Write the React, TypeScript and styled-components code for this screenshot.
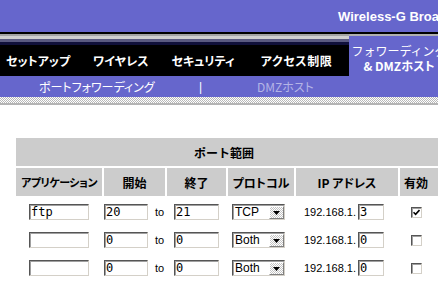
import React from 'react';
import styled, { createGlobalStyle } from 'styled-components';

const PURPLE = '#6666cc';
const JP = `"Noto Sans CJK JP", "Noto Sans", sans-serif`;
const LATIN = `"Liberation Sans", Arial, sans-serif`;
const MONO = `"DejaVu Sans Mono", "Liberation Mono", monospace`;
const COLS = '86px 61px 59px 66px 102px 40px';

const GlobalStyle = createGlobalStyle`
  html, body { margin: 0; padding: 0; background: #fff; }
  body { font-family: ${JP}; overflow: hidden; width: 438px; height: 288px; }
`;

const Page = styled.div`
  width: 438px;
  overflow: hidden;
`;

const TopBar = styled.header`
  height: 32px;
  background: ${PURPLE};
  display: flex;
  align-items: center;
  padding-left: 338px;
  box-sizing: border-box;
`;

const Brand = styled.h1`
  margin: 0;
  font: bold 13px ${LATIN};
  color: #fff;
  white-space: nowrap;
`;

const NavRow = styled.nav`
  display: flex;
  height: 44px;
  width: 460px;
`;

const MainNav = styled.div`
  flex: 0 0 349px;
  display: flex;
  flex-direction: column;
  border-top: 2px solid #000;
`;

const Band = styled.div`
  height: 11px;
  background: linear-gradient(
    #a4a4a4 0 2px,
    #d0d0d0 2px 5px,
    #5a5a80 5px 8px,
    #10103a 8px 11px
  );
`;

const NavItems = styled.ul`
  flex: 1;
  margin: 0;
  padding: 0 0 0 6px;
  list-style: none;
  background: #000;
  display: flex;
  align-items: center;
  gap: 23px;
`;

const NavItem = styled.li<{ $wide?: boolean }>`
  color: #fff;
  font: bold 12px ${JP};
  font-feature-settings: "palt";
  letter-spacing: ${(p) => (p.$wide ? '0.6px' : '0')};
  margin-left: ${(p) => (p.$wide ? '3px' : '0')};
  white-space: nowrap;
`;

const ActiveTab = styled.div`
  flex: 0 0 100px;
  border-top: 2px solid #000;
  background: linear-gradient(#b0b0b0 0 2px, ${PURPLE} 2px);
  display: flex;
  flex-direction: column;
  align-items: center;
  justify-content: center;
  padding-top: 5px;
  color: #fff;
  font-size: 12px;
  line-height: 15px;
  white-space: nowrap;
  overflow: hidden;
`;

const TabLine = styled.span<{ $bold?: boolean }>`
  font-weight: ${(p) => (p.$bold ? 'bold' : 'normal')};
  font-feature-settings: ${(p) => (p.$bold ? '"palt"' : 'normal')};
`;

const SubNav = styled.div`
  height: 21px;
  background: ${PURPLE};
  display: grid;
  grid-template-columns: 160px 58px auto;
  align-items: center;
  padding-left: 39px;
  font-size: 12px;
  white-space: nowrap;
`;

const SubLink = styled.span<{ $dim?: boolean }>`
  color: ${(p) => (p.$dim ? '#b4b4e6' : '#fff')};
  font-feature-settings: "palt";
`;

const SubSep = styled.span`
  color: #fff;
  font: 12px ${LATIN};
`;

const Dither = styled.div`
  height: 6px;
  background: repeating-conic-gradient(#b8b8b8 0 25%, #fff 0 50%) 0 0 / 2px 2px;
`;

const Rule = styled.div`
  height: 2px;
  background: #b4b4b4;
`;

const Content = styled.main`
  padding: 33px 0 0 16px;
`;

const Table = styled.div`
  display: flex;
  flex-direction: column;
  gap: 2px;
  width: max-content;
`;

const TitleCell = styled.div`
  height: 28px;
  background: #cccccc;
  display: flex;
  align-items: center;
  justify-content: center;
  padding-right: 8px;
  font: bold 12px ${JP};
`;

const HeaderRow = styled.div`
  display: grid;
  grid-template-columns: ${COLS};
  column-gap: 2px;
  height: 28px;
`;

const HeadCell = styled.div<{ $last?: boolean; $tight?: boolean }>`
  background: #cccccc;
  display: flex;
  align-items: center;
  justify-content: center;
  padding-right: ${(p) => (p.$last ? '8px' : '0')};
  font: bold ${(p) => (p.$tight ? '11px' : '12px')} ${JP};
  letter-spacing: ${(p) => (p.$tight ? '-0.5px' : '0')};
  font-feature-settings: "palt";
  white-space: nowrap;
`;

const Body = styled.div`
  display: flex;
  flex-direction: column;
`;

const DataRow = styled.div`
  display: grid;
  grid-template-columns: ${COLS};
  column-gap: 2px;
  height: 28px;
`;

const Cell = styled.div<{ $align?: 'start' | 'center'; $pl?: number; $pr?: number; $gap?: number }>`
  display: flex;
  align-items: center;
  justify-content: ${(p) => (p.$align === 'start' ? 'flex-start' : 'center')};
  padding-left: ${(p) => p.$pl ?? 0}px;
  padding-right: ${(p) => p.$pr ?? 0}px;
  gap: ${(p) => p.$gap ?? 0}px;
  font: 11px ${LATIN};
  white-space: nowrap;
`;

const TextInput = styled.input<{ $w: number }>`
  width: ${(p) => p.$w}px;
  height: 16px;
  box-sizing: border-box;
  margin: 0;
  padding: 0 1px;
  border: 1px solid;
  border-color: #555 #d4d0c8 #d4d0c8 #555;
  box-shadow: inset 1px 1px 0 #a0a0a0;
  background: #fff;
  color: #000;
  font: 12px ${MONO};
  outline: none;
`;

const Select = styled.div`
  display: flex;
  width: 53px;
  height: 16px;
  box-sizing: border-box;
  border: 1px solid;
  border-color: #555 #d4d0c8 #d4d0c8 #555;
  box-shadow: inset 1px 1px 0 #a0a0a0;
  background: #fff;
`;

const SelectValue = styled.span`
  flex: 1;
  padding-left: 2px;
  font: 12px/14px ${LATIN};
  color: #000;
`;

const SelectArrow = styled.span`
  width: 15px;
  margin: 1px 0 0 0;
  box-sizing: border-box;
  border: 1px solid;
  border-color: #fff #808080 #808080 #fff;
  background: repeating-conic-gradient(#c4c4c4 0 25%, #fff 0 50%) 0 0 / 2px 2px;
  display: flex;
  align-items: center;
  justify-content: center;
`;

const Check = styled.span`
  width: 11px;
  height: 11px;
  box-sizing: border-box;
  border: 1px solid;
  border-color: #555 #d4d0c8 #d4d0c8 #555;
  box-shadow: inset 1px 1px 0 #a0a0a0;
  background: #fff;
  display: inline-flex;
  align-items: center;
  justify-content: center;
`;

type PortRule = { app: string; start: string; end: string; proto: string; ip: string; on: boolean };

const rules: PortRule[] = [
  { app: 'ftp', start: '20', end: '21', proto: 'TCP', ip: '3', on: true },
  { app: '', start: '0', end: '0', proto: 'Both', ip: '0', on: false },
  { app: '', start: '0', end: '0', proto: 'Both', ip: '0', on: false },
];

const navItems = ['セットアップ', 'ワイヤレス', 'セキュリティ', 'アクセス制限'];

export default function App() {
  return (
    <Page>
      <GlobalStyle />
      <TopBar>
        <Brand>Wireless-G Broadband Router</Brand>
      </TopBar>
      <NavRow>
        <MainNav>
          <Band />
          <NavItems>
            {navItems.map((n, i) => (
              <NavItem key={n} $wide={i === navItems.length - 1}>
                {n}
              </NavItem>
            ))}
          </NavItems>
        </MainNav>
        <ActiveTab>
          <TabLine>フォワーディング</TabLine>
          <TabLine $bold>&amp; DMZホスト</TabLine>
        </ActiveTab>
      </NavRow>
      <SubNav>
        <SubLink>ポートフォワーディング</SubLink>
        <SubSep>|</SubSep>
        <SubLink $dim>DMZホスト</SubLink>
      </SubNav>
      <Dither />
      <Rule />
      <Content>
        <Table>
          <TitleCell>ポート範囲</TitleCell>
          <HeaderRow>
            <HeadCell $tight>アプリケーション</HeadCell>
            <HeadCell>開始</HeadCell>
            <HeadCell>終了</HeadCell>
            <HeadCell>プロトコル</HeadCell>
            <HeadCell>IP アドレス</HeadCell>
            <HeadCell $last>有効</HeadCell>
          </HeaderRow>
          <Body>
            {rules.map((r, i) => (
              <DataRow key={i}>
                <Cell>
                  <TextInput $w={60} defaultValue={r.app} readOnly />
                </Cell>
                <Cell $align="start" $gap={7}>
                  <TextInput $w={44} defaultValue={r.start} readOnly />
                  to
                </Cell>
                <Cell>
                  <TextInput $w={45} defaultValue={r.end} readOnly />
                </Cell>
                <Cell $align="start" $pl={4}>
                  <Select>
                    <SelectValue>{r.proto}</SelectValue>
                    <SelectArrow>
                      <svg width="7" height="4" viewBox="0 0 7 4">
                        <path d="M0 0h7L3.5 4z" fill="#000" />
                      </svg>
                    </SelectArrow>
                  </Select>
                </Cell>
                <Cell $align="start" $pl={8} $gap={2}>
                  192.168.1.
                  <TextInput $w={26} defaultValue={r.ip} readOnly />
                </Cell>
                <Cell $pr={8}>
                  <Check>
                    {r.on && (
                      <svg width="7" height="7" viewBox="0 0 7 7">
                        <path d="M0.5 3.2 L2.6 5.3 L6.5 1" stroke="#000" strokeWidth="1.6" fill="none" />
                      </svg>
                    )}
                  </Check>
                </Cell>
              </DataRow>
            ))}
          </Body>
        </Table>
      </Content>
    </Page>
  );
}
